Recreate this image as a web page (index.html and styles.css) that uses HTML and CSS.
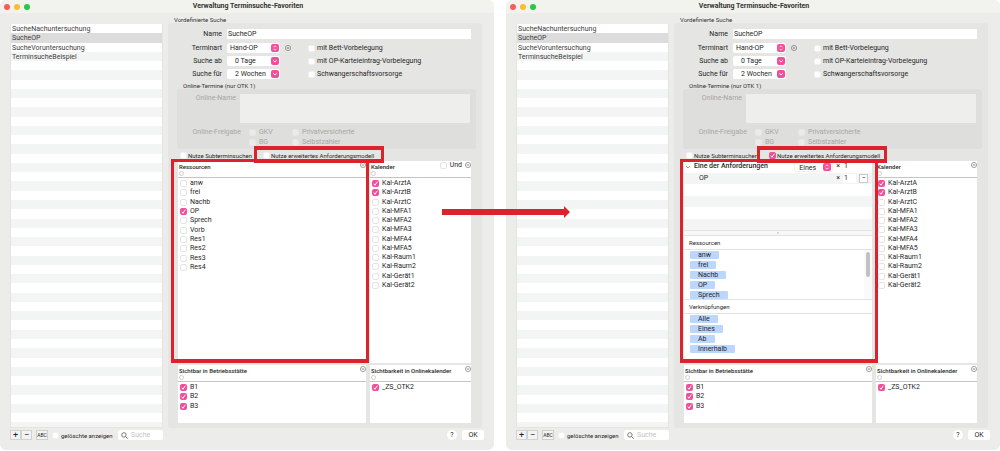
FILE: index.html
```html
<!DOCTYPE html>
<html lang="de">
<head>
<meta charset="utf-8">
<title>Verwaltung Terminsuche-Favoriten</title>
<link rel="stylesheet" href="styles.css">
</head>
<body>
<svg class="sprite" aria-hidden="true">
  <symbol id="more" viewBox="0 0 12 12"><circle cx="6" cy="6" r="5.200" fill="none" stroke="#666" stroke-width="1.200"/><path d="M3.500 6h5" stroke="#555" stroke-width="1.400"/></symbol>
  <symbol id="lens" viewBox="0 0 12 12"><circle cx="5" cy="5" r="3.800" fill="none" stroke="#555" stroke-width="1.300"/><path d="M8 8l3.300 3.300" stroke="#555" stroke-width="1.500"/></symbol>
</svg>
<main class="compare">

<section class="window">
  <header class="titlebar"><span class="light red"></span><span class="light yellow"></span><span class="light green"></span><h1>Verwaltung Terminsuche-Favoriten</h1></header>
  <div class="content">
    <ul class="favorites">
      <li>SucheNachuntersuchung</li><li class="selected">SucheOP</li><li>SucheVoruntersuchung</li><li>TerminsucheBeispiel</li>
      <li></li><li></li><li></li><li></li><li></li><li></li><li></li><li></li><li></li><li></li>
      <li></li><li></li><li></li><li></li><li></li><li></li><li></li><li></li><li></li><li></li>
      <li></li><li></li><li></li><li></li><li></li><li></li><li></li><li></li><li></li><li></li>
      <li></li><li></li><li></li><li></li><li></li><li></li><li></li><li></li><li></li><li></li>
    </ul>
    <div class="detail">
      <h2 class="legend">Vordefinierte Suche</h2>
      <div class="group">
        <div class="name-row"><label for="name-a">Name</label><input class="text" id="name-a" type="text" value="SucheOP"></div>
        <div class="fields">
          <label for="art-a">Terminart</label><select class="popup" id="art-a"><option>Hand-OP</option></select><button class="more" aria-label="Mehr"><svg><use href="#more"/></svg></button><label class="check"><input type="checkbox">mit Bett-Vorbelegung</label>
          <label for="ab-a">Suche ab</label><select class="popup combo" id="ab-a"><option>0 Tage</option></select><span></span><label class="check"><input type="checkbox">mit OP-Karteieintrag-Vorbelegung</label>
          <label for="fuer-a">Suche für</label><select class="popup combo" id="fuer-a"><option>2 Wochen</option></select><span></span><label class="check"><input type="checkbox">Schwangerschaftsvorsorge</label>
        </div>
        <h3 class="legend inner">Online-Termine (nur OTK 1)</h3>
        <div class="online">
          <div class="online-name"><label for="on-a">Online-Name</label><textarea id="on-a" disabled></textarea></div>
          <div class="online-release"><span>Online-Freigabe</span>
            <label class="check"><input type="checkbox" disabled>GKV</label><label class="check"><input type="checkbox" disabled>Privatversicherte</label>
            <label class="check bg"><input type="checkbox" disabled>BG</label><label class="check"><input type="checkbox" disabled>Selbstzahler</label>
          </div>
        </div>
        <div class="options">
          <label class="check"><input type="checkbox">Nutze Subterminsuchen</label>
          <label class="check marked"><input type="checkbox">Nutze erweitertes Anforderungsmodell</label>
        </div>
        <div class="panels">
          <section class="panel marked-panel">
            <header><h4>Ressourcen</h4><button class="more" aria-label="Mehr"><svg><use href="#more"/></svg></button><i class="dot"></i></header>
            <div class="rows ten">
              <label class="check"><input type="checkbox">anw</label>
              <label class="check"><input type="checkbox">frei</label>
              <label class="check"><input type="checkbox">Nachb</label>
              <label class="check"><input type="checkbox" checked>OP</label>
              <label class="check"><input type="checkbox">Sprech</label>
              <label class="check"><input type="checkbox">Vorb</label>
              <label class="check"><input type="checkbox">Res1</label>
              <label class="check"><input type="checkbox">Res2</label>
              <label class="check"><input type="checkbox">Res3</label>
              <label class="check"><input type="checkbox">Res4</label>
            </div>
          </section>
          <section class="panel">
            <header><h4>Kalender</h4><label class="check und"><input type="checkbox">Und</label><button class="more" aria-label="Mehr"><svg><use href="#more"/></svg></button><i class="dot"></i></header>
            <div class="rows twelve">
              <label class="check"><input type="checkbox" checked>Kal-ArztA</label>
              <label class="check"><input type="checkbox" checked>Kal-ArztB</label>
              <label class="check"><input type="checkbox">Kal-ArztC</label>
              <label class="check"><input type="checkbox">Kal-MFA1</label>
              <label class="check"><input type="checkbox">Kal-MFA2</label>
              <label class="check"><input type="checkbox">Kal-MFA3</label>
              <label class="check"><input type="checkbox">Kal-MFA4</label>
              <label class="check"><input type="checkbox">Kal-MFA5</label>
              <label class="check"><input type="checkbox">Kal-Raum1</label>
              <label class="check"><input type="checkbox">Kal-Raum2</label>
              <label class="check"><input type="checkbox">Kal-Gerät1</label>
              <label class="check"><input type="checkbox">Kal-Gerät2</label>
            </div>
          </section>
          <section class="panel">
            <header><h4>Sichtbar in Betriebsstätte</h4><button class="more" aria-label="Mehr"><svg><use href="#more"/></svg></button><i class="dot"></i></header>
            <div class="rows three">
              <label class="check"><input type="checkbox" checked>B1</label>
              <label class="check"><input type="checkbox" checked>B2</label>
              <label class="check"><input type="checkbox" checked>B3</label>
            </div>
          </section>
          <section class="panel">
            <header><h4>Sichtbarkeit in Onlinekalender</h4><button class="more" aria-label="Mehr"><svg><use href="#more"/></svg></button><i class="dot"></i></header>
            <div class="rows three"><label class="check"><input type="checkbox" checked>_ZS_OTK2</label></div>
          </section>
        </div>
      </div>
    </div>
  </div>
  <footer class="actions">
    <div class="list-tools">
      <div class="pair"><button aria-label="Hinzufügen">+</button><button aria-label="Entfernen">−</button></div>
      <button class="abc">ABC</button>
      <label class="check small"><input type="checkbox">gelöschte anzeigen</label>
      <label class="search"><svg><use href="#lens"/></svg><input type="text" placeholder="Suche" aria-label="Suche"></label>
    </div>
    <button class="help">?</button><button class="ok">OK</button>
  </footer>
</section>

<section class="window after">
  <header class="titlebar"><span class="light red"></span><span class="light yellow"></span><span class="light green"></span><h1>Verwaltung Terminsuche-Favoriten</h1></header>
  <div class="content">
    <ul class="favorites">
      <li>SucheNachuntersuchung</li><li class="selected">SucheOP</li><li>SucheVoruntersuchung</li><li>TerminsucheBeispiel</li>
      <li></li><li></li><li></li><li></li><li></li><li></li><li></li><li></li><li></li><li></li>
      <li></li><li></li><li></li><li></li><li></li><li></li><li></li><li></li><li></li><li></li>
      <li></li><li></li><li></li><li></li><li></li><li></li><li></li><li></li><li></li><li></li>
      <li></li><li></li><li></li><li></li><li></li><li></li><li></li><li></li><li></li><li></li>
    </ul>
    <div class="detail">
      <h2 class="legend">Vordefinierte Suche</h2>
      <div class="group">
        <div class="name-row"><label for="name-b">Name</label><input class="text" id="name-b" type="text" value="SucheOP"></div>
        <div class="fields">
          <label for="art-b">Terminart</label><select class="popup" id="art-b"><option>Hand-OP</option></select><button class="more" aria-label="Mehr"><svg><use href="#more"/></svg></button><label class="check"><input type="checkbox">mit Bett-Vorbelegung</label>
          <label for="ab-b">Suche ab</label><select class="popup combo" id="ab-b"><option>0 Tage</option></select><span></span><label class="check"><input type="checkbox">mit OP-Karteieintrag-Vorbelegung</label>
          <label for="fuer-b">Suche für</label><select class="popup combo" id="fuer-b"><option>2 Wochen</option></select><span></span><label class="check"><input type="checkbox">Schwangerschaftsvorsorge</label>
        </div>
        <h3 class="legend inner">Online-Termine (nur OTK 1)</h3>
        <div class="online">
          <div class="online-name"><label for="on-b">Online-Name</label><textarea id="on-b" disabled></textarea></div>
          <div class="online-release"><span>Online-Freigabe</span>
            <label class="check"><input type="checkbox" disabled>GKV</label><label class="check"><input type="checkbox" disabled>Privatversicherte</label>
            <label class="check bg"><input type="checkbox" disabled>BG</label><label class="check"><input type="checkbox" disabled>Selbstzahler</label>
          </div>
        </div>
        <div class="options">
          <label class="check"><input type="checkbox">Nutze Subterminsuchen</label>
          <label class="check marked"><input type="checkbox" checked>Nutze erweitertes Anforderungsmodell</label>
        </div>
        <div class="panels">
          <section class="model marked-panel">
            <div class="rules">
              <div class="rule"><svg class="chevron" viewBox="0 0 6 6"><path d="M1 2l2 2 2-2" fill="none" stroke="#888" stroke-width=".8"/></svg><b>Eine der Anforderungen</b><select class="popup" aria-label="Verknüpfung"><option>Eines</option></select><span>×</span><input type="text" value="1" aria-label="Anzahl"></div>
              <div class="rule item"><span class="rule-name">OP</span><span>×</span><input type="text" value="1" aria-label="Anzahl OP"><button class="remove" aria-label="OP entfernen">−</button></div>
              <div class="rule"></div><div class="rule"></div><div class="rule"></div><div class="rule"></div>
            </div>
            <div class="splitter"><i></i></div>
            <h4>Ressourcen</h4>
            <div class="tokens scroll"><ul><li>anw</li><li>frei</li><li>Nachb</li><li>OP</li><li>Sprech</li></ul><div class="track"><i></i></div></div>
            <h4>Verknüpfungen</h4>
            <div class="tokens"><ul><li>Alle</li><li>Eines</li><li>Ab</li><li>Innerhalb</li></ul></div>
          </section>
          <section class="panel">
            <header><h4>Kalender</h4><button class="more" aria-label="Mehr"><svg><use href="#more"/></svg></button><i class="dot"></i></header>
            <div class="rows twelve">
              <label class="check"><input type="checkbox" checked>Kal-ArztA</label>
              <label class="check"><input type="checkbox" checked>Kal-ArztB</label>
              <label class="check"><input type="checkbox">Kal-ArztC</label>
              <label class="check"><input type="checkbox">Kal-MFA1</label>
              <label class="check"><input type="checkbox">Kal-MFA2</label>
              <label class="check"><input type="checkbox">Kal-MFA3</label>
              <label class="check"><input type="checkbox">Kal-MFA4</label>
              <label class="check"><input type="checkbox">Kal-MFA5</label>
              <label class="check"><input type="checkbox">Kal-Raum1</label>
              <label class="check"><input type="checkbox">Kal-Raum2</label>
              <label class="check"><input type="checkbox">Kal-Gerät1</label>
              <label class="check"><input type="checkbox">Kal-Gerät2</label>
            </div>
          </section>
          <section class="panel">
            <header><h4>Sichtbar in Betriebsstätte</h4><button class="more" aria-label="Mehr"><svg><use href="#more"/></svg></button><i class="dot"></i></header>
            <div class="rows three">
              <label class="check"><input type="checkbox" checked>B1</label>
              <label class="check"><input type="checkbox" checked>B2</label>
              <label class="check"><input type="checkbox" checked>B3</label>
            </div>
          </section>
          <section class="panel">
            <header><h4>Sichtbarkeit in Onlinekalender</h4><button class="more" aria-label="Mehr"><svg><use href="#more"/></svg></button><i class="dot"></i></header>
            <div class="rows three"><label class="check"><input type="checkbox" checked>_ZS_OTK2</label></div>
          </section>
        </div>
      </div>
    </div>
  </div>
  <footer class="actions">
    <div class="list-tools">
      <div class="pair"><button aria-label="Hinzufügen">+</button><button aria-label="Entfernen">−</button></div>
      <button class="abc">ABC</button>
      <label class="check small"><input type="checkbox">gelöschte anzeigen</label>
      <label class="search"><svg><use href="#lens"/></svg><input type="text" placeholder="Suche" aria-label="Suche"></label>
    </div>
    <button class="help">?</button><button class="ok">OK</button>
  </footer>
</section>

<svg class="arrow" viewBox="0 0 128 12" aria-hidden="true"><path d="M0 3h122V0l6 6-6 6V9H0z" fill="#dc222d"/></svg>
</main>
</body>
</html>
```
FILE: styles.css
```css
* { box-sizing: border-box; }
body { margin: 0; background: #fff; color: #1f1f1f; font: 7px/9px Roboto, "Liberation Sans", sans-serif; }
h1, h2, h3, h4, ul { margin: 0; padding: 0; font: inherit; list-style: none; }
input, select, button, textarea { margin: 0; padding: 0; border: 0; font: inherit; color: inherit; outline: none; }
button { background: none; }
.sprite { display: none; }

.compare { position: relative; display: grid; grid-template-columns: 1fr 1fr; gap: 12px; }
.window { background: #ececea; border-radius: 6px; padding-bottom: 10px; min-width: 0; overflow: hidden; }
.titlebar { display: flex; align-items: center; gap: 4px; height: 13px; padding: 0 4px; background: #f2f3ee; }
.titlebar h1 { flex: 1; text-align: center; font-weight: 700; padding-right: 28px; color: #333; }
.light { width: 6px; height: 6px; border-radius: 50%; }
.red { background: #fc5b57; }
.yellow { background: #fdbc2e; }
.green { background: #28c840; }

.content { display: grid; grid-template-columns: 153fr 314fr; gap: 5px; padding: 0 12px 0 10px; }
.favorites { display: grid; grid-template-rows: repeat(43, minmax(0, 10fr)) minmax(0, 5fr); margin-top: 11px; background: #fff; border: 1px solid #e4e4e2; border-top: 0; height: 404px; color: #3c3c3c; }
.favorites li { padding-left: 1px; min-height: 0; line-height: 10px; }
.favorites li:nth-child(even) { background: #f3f5f5; }
.favorites li.selected { background: #dcdcdc; }

.detail { padding-top: 3px; min-width: 0; }
.legend { font-size: 6px; line-height: 7px; padding-left: 6px; color: #303030; }
.group { background: #e5e5e3; border-radius: 3px; padding: 6px 0 5px; }
.name-row { display: grid; grid-template-columns: 54px 1fr; gap: 5px; padding-right: 11px; text-align: right; align-items: center; }
.text { height: 10px; background: #fff; padding-left: 1px; min-width: 0; }
.fields { display: grid; grid-template-columns: 54px 53px 18px 1fr; gap: 3px 5px; margin-top: 4px; align-items: center; }
.fields > label:not(.check) { text-align: right; }
.popup { appearance: none; height: 10px; line-height: 10px; padding-left: 3px; border-radius: 2px; background: #fff url("data:image/svg+xml,%3Csvg xmlns='http://www.w3.org/2000/svg' viewBox='0 0 16 16'%3E%3Crect width='16' height='16' rx='4' fill='%23f0509a'/%3E%3Cpath d='M5 6.500l3-3 3 3M5 9.500l3 3 3-3' fill='none' stroke='%23fff' stroke-width='1.600'/%3E%3C/svg%3E") no-repeat right 1px center / 8px 8px; }
.combo { padding-left: 8px; background-image: url("data:image/svg+xml,%3Csvg xmlns='http://www.w3.org/2000/svg' viewBox='0 0 16 16'%3E%3Crect width='16' height='16' rx='4' fill='%23f0509a'/%3E%3Cpath d='M4.500 6.500l3.500 3.500 3.500-3.500' fill='none' stroke='%23fff' stroke-width='1.800'/%3E%3C/svg%3E"); }
.more { display: block; width: 6px; height: 6px; }
.more svg { display: block; width: 6px; height: 6px; }

.check { display: flex; align-items: center; gap: 3px; white-space: nowrap; }
.check input { appearance: none; flex: none; width: 7px; height: 7px; border-radius: 2px; background: #fff; border: 1px solid #f0f0f0; }
.panel .check input { border-color: #e4e4e4; }
.check input:checked { border: 0; background: #f0509a url("data:image/svg+xml,%3Csvg xmlns='http://www.w3.org/2000/svg' viewBox='0 0 14 14'%3E%3Cpath d='M3.500 7.500l2.500 3 4.500-7' fill='none' stroke='%23fff' stroke-width='1.900'/%3E%3C/svg%3E") center / 7px 7px; }
.small { font-size: 6px; gap: 2px; }
.fields .check { gap: 2px; }

.inner { margin-top: 3px; padding-left: 15px; }
.online { margin: 0 6px 0 9px; padding: 5px 6px 2px 0; background: #dededd; border-radius: 3px; color: #a6a6a6; }
.online-name { display: grid; grid-template-columns: 59px 1fr; gap: 4px; text-align: right; }
.online textarea { height: 29px; resize: none; background: #eeeeed; }
.online-release { display: grid; grid-template-columns: 64px 35px 1fr; grid-auto-rows: 10px; column-gap: 8px; margin-top: 4px; align-items: center; }
.online-release > span { text-align: right; }
.online-release .bg { grid-column: 2; }
.online .check input { background: #ebebea; border-color: #e6e6e5; }

.options { display: grid; grid-template-columns: 83px 108px; height: 12px; align-items: center; padding-left: 12px; }
.options .check { font-size: 6px; gap: 1px; }
.marked, .marked-panel { position: relative; }
.marked::after { content: ""; position: absolute; z-index: 2; inset: -5px -13px -3px -9px; border: solid #dc222d; border-width: 4px 3px; }
.after .marked::after { inset: -5px -10px -3px -12px; }

.panels { display: grid; grid-template-columns: 188fr 101fr; grid-template-rows: 202px 58px; gap: 2px 4px; margin: 0 11px 0 10px; }
.panel { background: #fff; min-width: 0; }
.panel header { display: grid; grid-template-columns: 1fr auto auto; grid-template-rows: 9px 6px; row-gap: 1px; column-gap: 3px; padding-left: 1px; height: 17px; border-bottom: 1px solid #c4c4c4; }
.panel h4 { font-size: 6px; font-weight: 500; line-height: 11px; white-space: nowrap; }
.panel .more { grid-column: 3; margin-top: 1px; }
.dot { grid-column: 1; width: 5px; height: 5px; border: 1px solid #d0d0d0; border-radius: 50%; }
.rows { display: grid; grid-auto-rows: 1fr; padding: 0 2px; margin-top: 1px; }
.ten { height: 93px; }
.twelve { height: 111px; }
.three { height: 28px; grid-template-rows: repeat(3, 1fr); }
.marked-panel::after { content: ""; position: absolute; z-index: 1; inset: -2px -3px 0 -7px; border: 3px solid #dc222d; border-bottom-width: 4px; }
.after .marked-panel::after { inset: -2px -6px 0 -4px; }

.model { background: #fff; min-width: 0; }
.rules { display: grid; grid-auto-rows: 1fr; height: 69px; }
.rule { display: flex; align-items: center; gap: 3px; padding: 0 16px 0 1px; min-height: 0; }
.rule:nth-child(even) { background: #f3f5f5; }
.rule b { flex: 1; font-weight: 500; white-space: nowrap; }
.rule .popup { width: 39px; padding-left: 4px; border: 1px solid #f0f0f0; }
.rule input { width: 13px; height: 9px; padding-left: 1px; background: #fff; }
.chevron { width: 6px; height: 6px; }
.item { padding: 0 4px 0 15px; }
.rule-name { flex: 1; }
.remove { width: 9px; height: 9px; line-height: 7px; background: #fff; border: 1px solid #c9c9c9; }
.splitter { display: flex; align-items: center; justify-content: center; height: 6px; background: #f8f8f8; border: solid #e2e2e2; border-width: 1px 0; }
.splitter i { width: 2px; height: 2px; border-radius: 50%; background: #ccc; }
.model h4 { font-size: 6px; line-height: 13px; padding-left: 5px; border-bottom: 1px solid #e2e2e2; }
.tokens { padding: 0 0 0 6px; }
.tokens ul { display: grid; justify-items: start; grid-auto-rows: 8px; gap: 2px; padding-top: 1px; }
.tokens li { background: #bcd7fd; padding: 0 8px; line-height: 8px; border-radius: 1px; }
.scroll { display: flex; height: 50px; border-bottom: 1px solid #e2e2e2; }
.scroll ul { flex: 1; }
.track { width: 8px; background: #fafafa; padding: 2px; }
.track i { display: block; height: 25px; width: 4px; border-radius: 2px; background: #c1c1c1; }

.actions { display: flex; align-items: center; gap: 5px; padding: 2px 10px 0; }
.list-tools { display: flex; align-items: center; gap: 4px; width: 153px; margin-right: auto; }
.pair { display: flex; }
.pair button { width: 11px; height: 10px; line-height: 8px; font-size: 9px; border: 1px solid #d2d2d2; background: #f3f3f3; }
.abc { width: 12px; height: 10px; line-height: 8px; font-size: 5px; border: 1px solid #cfcfcf; background: #f3f3f3; }
.search { display: flex; align-items: center; gap: 3px; width: 45px; min-width: 0; margin-left: auto; height: 10px; padding-left: 3px; background: #fff; border-radius: 2px; }
.search svg { width: 7px; height: 7px; flex: none; }
.search input { min-width: 0; width: 100%; background: none; }
.search input::placeholder { color: #c4c4c4; }
.help { width: 10px; height: 10px; border-radius: 50%; background: #fff; line-height: 10px; }
.ok { width: 22px; height: 10px; border-radius: 2px; background: #fff; line-height: 10px; }

.arrow { position: absolute; z-index: 3; left: 44.2%; top: 206px; width: 12.8%; height: 12px; }
```
